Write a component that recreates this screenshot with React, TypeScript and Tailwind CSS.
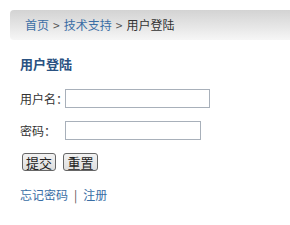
export default function App() {
  const font = { fontFamily: '"Noto Sans CJK SC", "Noto Sans", sans-serif' };
  return (
    <div className="w-[290px] h-[225px] bg-white overflow-hidden text-[12px] text-[#333]" style={font}>
      <div className="pt-[10px] pl-[10px]">
        <div className="h-[30px] rounded-l-[4px] bg-gradient-to-b from-[#d3d3d3] to-[#f6f6f6] flex items-center pl-[15px] text-[12px] leading-none">
          <span className="text-[#3a6ea5]">首页</span>
          <span className="mx-[4px] text-[#555]">&gt;</span>
          <span className="text-[#3a6ea5]">技术支持</span>
          <span className="mx-[4px] text-[#555]">&gt;</span>
          <span className="text-[#333]">用户登陆</span>
        </div>
      </div>
      <div className="pl-[20px]">
        <div className="mt-[17px] text-[13px] font-bold text-[#2a5282] leading-[14px]">用户登陆</div>
        <div className="mt-[18px] flex items-center h-[19px]">
          <span className="w-[45px] shrink-0 whitespace-nowrap leading-none">用户名：</span>
          <div className="w-[145px] h-[19px] border border-[#a8b0ba] bg-white" />
        </div>
        <div className="mt-[13px] flex items-center h-[19px]">
          <span className="w-[45px] shrink-0 whitespace-nowrap leading-none">密码：</span>
          <div className="w-[136px] h-[19px] border border-[#a8b0ba] bg-white" />
        </div>
        <div className="mt-[13px] ml-[2px] flex gap-[7px] h-[18px]">
          <div className="w-[34px] h-[18px] border border-[#666] rounded-[3px] bg-gradient-to-b from-[#f2f2f2] to-[#dedede] flex items-center justify-center text-[13px] leading-none text-[#222]">提交</div>
          <div className="w-[35px] h-[18px] border border-[#666] rounded-[3px] bg-gradient-to-b from-[#f2f2f2] to-[#dedede] flex items-center justify-center text-[13px] leading-none text-[#222]">重置</div>
        </div>
        <div className="mt-[18px] flex items-center text-[12px] leading-none">
          <span className="text-[#3a6ea5]">忘记密码</span>
          <span className="mx-[6px] text-[#555]">|</span>
          <span className="text-[#3a6ea5]">注册</span>
        </div>
      </div>
    </div>
  );
}
